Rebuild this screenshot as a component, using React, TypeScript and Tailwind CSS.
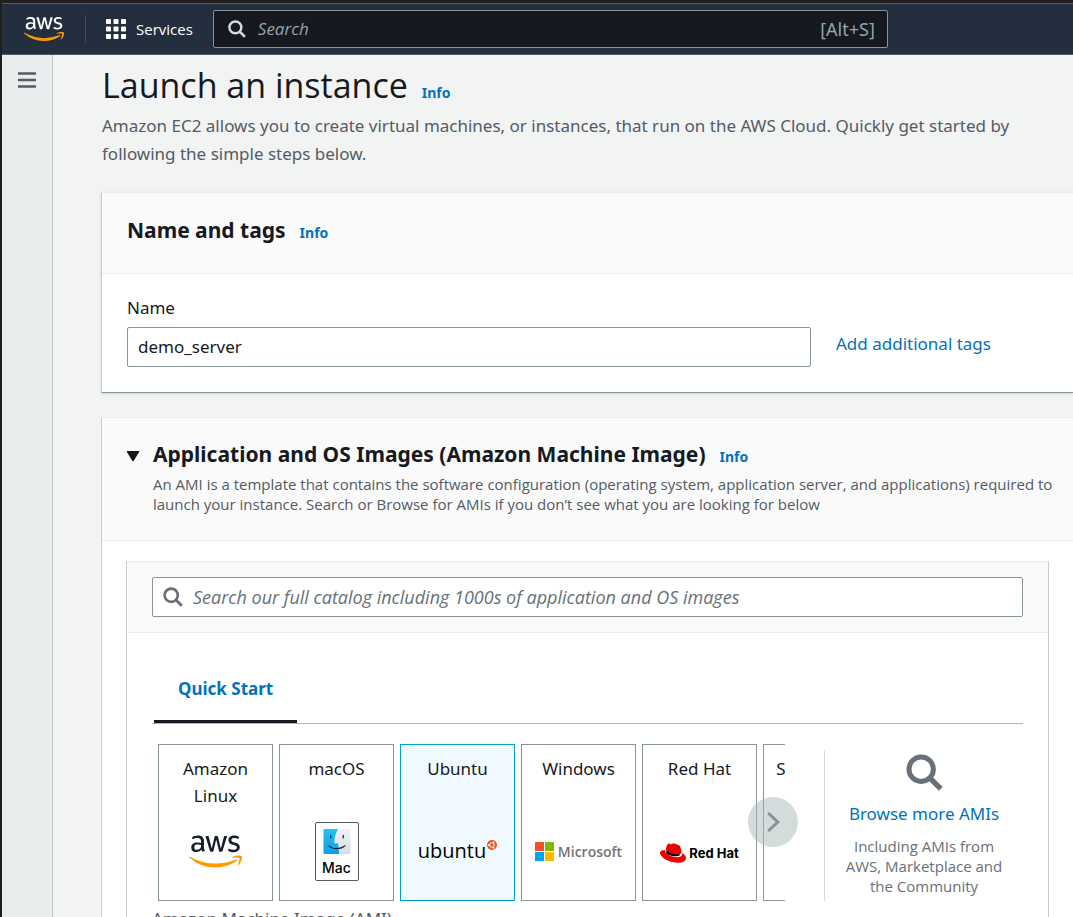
import React from "react";
import { FaAws, FaRedhat } from "react-icons/fa";

function SearchIcon({ className }: { className: string }) {
  return (
    <svg viewBox="0 0 20 20" fill="none" stroke="currentColor" className={className} aria-hidden="true">
      <circle cx="8.2" cy="8.2" r="6.6" strokeWidth="2.7" />
      <path d="M13 13l5.8 5.8" strokeWidth="2.9" />
    </svg>
  );
}

function AwsLogo({ id, letters, className }: { id: string; letters: string; className: string }) {
  return (
    <span className="block">
      <svg width="0" height="0" className="absolute" aria-hidden="true">
        <defs>
          <linearGradient id={id} gradientUnits="userSpaceOnUse" x1="0" y1="0" x2="0" y2="512">
            <stop offset="0.56" stopColor={letters} />
            <stop offset="0.56" stopColor="#ff9900" />
          </linearGradient>
        </defs>
      </svg>
      <FaAws fill={`url(#${id})`} className={className} aria-label="AWS" />
    </span>
  );
}

function FinderLogo() {
  return (
    <div className="flex h-[59px] w-11 flex-col items-center rounded-[2px] border border-[#545b64] bg-white pt-1.5">
      <svg viewBox="0 0 28 26" className="h-[26px] w-7" aria-hidden="true">
        <defs>
          <linearGradient id="finder-left" x1="0" y1="0" x2="0" y2="1">
            <stop offset="0" stopColor="#26c0f5" />
            <stop offset="1" stopColor="#0c9fe6" />
          </linearGradient>
          <linearGradient id="finder-right" x1="0" y1="0" x2="0" y2="1">
            <stop offset="0" stopColor="#f0f1f5" />
            <stop offset="1" stopColor="#d5dde8" />
          </linearGradient>
        </defs>
        <rect width="28" height="26" rx="1" fill="url(#finder-right)" />
        <path d="M1 0h14.5C13 4.500 11.800 9 11.600 14.500h4.200c0 4 .3 8 1.200 11.500H1a1 1 0 0 1-1-1V1a1 1 0 0 1 1-1z" fill="url(#finder-left)" />
        <path d="M15.500 0C13 4.500 11.800 9 11.600 14.500h4.200c0 4 .3 8 1.200 11.500" fill="none" stroke="#fff" strokeWidth="0.700" />
        <path d="M7.500 6.500v2.800M20.500 6.500v2.800" stroke="#1c2836" strokeWidth="1.300" strokeLinecap="round" />
        <path d="M5.500 17.500c4.500 4 12.500 4 16.800-.2" fill="none" stroke="#1c2836" strokeWidth="1.200" strokeLinecap="round" />
      </svg>
      <span className="pt-0.5 font-['Inter','Liberation_Sans',sans-serif] text-[14px] leading-6 font-medium text-black">Mac</span>
    </div>
  );
}

function UbuntuLogo() {
  return (
    <div className="flex items-start gap-px pb-0.5 text-black">
      <span className="font-['Open_Sans','Noto_Sans',sans-serif] text-[20px] leading-6">ubuntu</span>
      <svg viewBox="0 0 10 10" className="mt-px h-2.5 w-2.5" aria-hidden="true">
        <circle cx="5" cy="5" r="5" fill="#e95420" />
        <circle cx="5" cy="5" r="2.300" fill="none" stroke="#fff" strokeWidth="1" />
        <circle cx="1.900" cy="5" r="0.900" fill="#fff" />
        <circle cx="6.600" cy="2.300" r="0.900" fill="#fff" />
        <circle cx="6.600" cy="7.700" r="0.900" fill="#fff" />
      </svg>
    </div>
  );
}

function MicrosoftLogo() {
  return (
    <div className="flex items-center gap-1">
      <svg viewBox="0 0 19 19" className="h-[19px] w-[19px]" aria-hidden="true">
        <path fill="#f25022" d="M0 0h9v9H0z" />
        <path fill="#7fba00" d="M10 0h9v9h-9z" />
        <path fill="#00a4ef" d="M0 10h9v9H0z" />
        <path fill="#ffb900" d="M10 10h9v9h-9z" />
      </svg>
      <span className="font-['Open_Sans','Noto_Sans',sans-serif] text-[14px] leading-5 font-semibold text-[#737373]">Microsoft</span>
    </div>
  );
}

function RedHatLogo() {
  return (
    <div className="flex items-center gap-[3px] pt-0.5">
      <svg viewBox="0 0 512 512" className="h-[26px] w-[26px]" aria-hidden="true">
        <path d="M130 190l-10 60c30 50 190 100 270 50l-10-60z" fill="#000" />
        <FaRedhat size="512" color="#ee0000" />
      </svg>
      <span className="font-['Inter','Liberation_Sans',sans-serif] text-[13px] leading-5 font-bold text-black">Red Hat</span>
    </div>
  );
}

const images = [
  { name: "Amazon Linux", logo: <AwsLogo id="aws-dark" letters="#161e2d" className="h-[53px] w-[53px]" /> },
  { name: "macOS", logo: <FinderLogo /> },
  { name: "Ubuntu", logo: <UbuntuLogo />, selected: true },
  { name: "Windows", logo: <MicrosoftLogo /> },
  { name: "Red Hat", logo: <RedHatLogo /> },
  { name: "SUSE Linux", logo: null },
];

function InfoLink() {
  return (
    <a href="#info" className="text-[14px] leading-5 font-bold text-[#0073bb]">
      Info
    </a>
  );
}

function TopBar() {
  return (
    <header className="flex h-[52px] shrink-0 items-center border-y border-[#545b64] bg-[#232f3e] pl-[22px]">
      <a href="#home" aria-label="AWS home">
        <AwsLogo id="aws-light" letters="#ffffff" className="h-10 w-10" />
      </a>
      <div className="ml-[21px] h-7 w-px bg-[#414d5c]" />
      <button type="button" className="ml-5 flex items-center gap-2.5 font-['Open_Sans','Noto_Sans',sans-serif] text-[15px] font-medium text-white">
        <svg viewBox="0 0 20 20" fill="currentColor" className="h-5 w-5" aria-hidden="true">
          {[0, 7.5, 15].map((y) =>
            [0, 7.5, 15].map((x) => <rect key={`${x}-${y}`} x={x} y={y} width="5" height="5" rx="0.800" />)
          )}
        </svg>
        Services
      </button>
      <label className="ml-5 flex h-[38px] w-[675px] items-center gap-3 rounded-[2px] border border-[#879596] bg-[#16191f] px-3 text-[#95a5a6]">
        <SearchIcon className="ml-0.5 h-[18px] w-[18px] text-[#d5dbdb]" />
        <input
          type="search"
          aria-label="Search"
          placeholder="Search"
          className="min-w-0 flex-1 bg-transparent font-['Open_Sans','Noto_Sans',sans-serif] text-[17px] outline-none placeholder:text-[#95a5a6] placeholder:italic"
        />
        <span className="text-[18px]">[Alt+S]</span>
      </label>
    </header>
  );
}

function NameCard() {
  return (
    <section className="border border-r-0 border-[#c5cfd0] border-t-[#eaeded] border-b-[#879596] bg-white shadow-sm">
      <div className="flex h-[81px] items-center border-b border-[#eaeded] bg-[#fafafa] px-[25px] pb-1.5">
        <div className="flex items-baseline gap-3.5">
          <h2 className="text-[21px] leading-7 font-bold">Name and tags</h2>
          <InfoLink />
        </div>
      </div>
      <div className="px-[25px] pt-5 pb-[25px]">
        <label htmlFor="instance-name" className="block text-[17px] leading-7">
          Name
        </label>
        <div className="mt-[5px] flex items-center gap-[25px]">
          <input
            id="instance-name"
            type="text"
            defaultValue="demo_server"
            className="h-10 w-[684px] rounded-[2px] border border-[#879596] bg-white px-2.5 pb-0.5 text-[17px] outline-none"
          />
          <a href="#tags" className="pb-1.5 text-[17px] leading-7 whitespace-nowrap text-[#0073bb]">
            Add additional tags
          </a>
        </div>
      </div>
    </section>
  );
}

function ImagePicker() {
  return (
    <div className="flex pt-5">
      <div className="relative min-w-0 flex-1">
        <div className="flex gap-1.5 overflow-hidden pl-1.5">
          {images.map((image) => (
            <button
              key={image.name}
              type="button"
              aria-pressed={Boolean(image.selected)}
              className={
                image.selected
                  ? "flex h-[157px] w-[115px] shrink-0 flex-col items-center border border-[#00a1c9] bg-[#f1faff] pt-2.5"
                  : "flex h-[157px] w-[115px] shrink-0 flex-col items-center border border-[#879596] bg-white pt-2.5"
              }
            >
              <span className="h-[54px] px-3 text-center text-[17px] leading-[27px]">{image.name}</span>
              <span className="flex h-[85px] items-center justify-center">{image.logo}</span>
            </button>
          ))}
        </div>
        <button
          type="button"
          aria-label="Next images"
          className="absolute top-[53px] -right-[13px] flex h-[50px] w-[50px] items-center justify-center rounded-full bg-[#aab7b8]/50"
        >
          <svg viewBox="0 0 20 20" fill="none" stroke="#879196" strokeWidth="2.500" className="h-6 w-6" aria-hidden="true">
            <path d="M6 2.500l8 7.500-8 7.500" />
          </svg>
        </button>
      </div>
      <div className="mt-1.5 ml-[39px] flex w-[199px] shrink-0 flex-col items-center border-l border-[#d5dbdb] pt-1">
        <SearchIcon className="h-[37px] w-[37px] text-[#687078]" />
        <a href="#browse" className="mt-[9px] text-[17px] leading-7 whitespace-nowrap text-[#0073bb]">
          Browse more AMIs
        </a>
        <p className="mt-2 w-40 text-center font-['Open_Sans','Noto_Sans',sans-serif] text-[15px] leading-5 text-[#687078]">
          Including AMIs from AWS, Marketplace and the Community
        </p>
      </div>
    </div>
  );
}

function ImagesCard() {
  return (
    <section className="mt-6 border border-r-0 border-[#c5cfd0] border-t-[#eaeded] bg-white">
      <div className="flex gap-[13px] border-b border-[#eaeded] bg-[#fafafa] pt-[22px] pr-4 pb-[26px] pl-6">
        <button type="button" aria-label="Collapse section" className="mt-[9px] h-3.5 w-3.5 text-[#16191f]">
          <svg viewBox="0 0 14 14" fill="currentColor" className="h-3.5 w-3.5" aria-hidden="true">
            <path d="M1.500 2h11q1.200 0 .6 1L7.800 11.700q-.8.900-1.600 0L.900 3q-.6-1 .6-1z" />
          </svg>
        </button>
        <div>
          <div className="flex items-baseline gap-3.5">
            <h2 className="text-[21px] leading-7 font-bold">Application and OS Images (Amazon Machine Image)</h2>
            <InfoLink />
          </div>
          <p className="mt-1.5 font-['Open_Sans','Noto_Sans',sans-serif] text-[15px] leading-5 text-[#545b64]">
            An AMI is a template that contains the software configuration (operating system, application server, and
            applications) required to launch your instance. Search or Browse for AMIs if you don’t see what you are
            looking for below
          </p>
        </div>
      </div>
      <div className="px-6 pt-5">
        <div className="border border-[#c5cfd0] border-t-[#eaeded]">
          <div className="border-b border-[#eaeded] bg-[#fafafa] px-[25px] py-[15px]">
            <label className="flex h-10 items-center gap-2.5 rounded-[2px] border border-[#879596] bg-white px-2.5 text-[#687078]">
              <SearchIcon className="h-5 w-5" />
              <input
                type="search"
                aria-label="Search images"
                placeholder="Search our full catalog including 1000s of application and OS images"
                className="min-w-0 flex-1 bg-transparent font-['Open_Sans','Noto_Sans',sans-serif] text-[18px] outline-none placeholder:text-[#687078] placeholder:italic"
              />
            </label>
          </div>
          <div className="px-[25px] pt-9 pb-10">
            <div role="tablist" className="flex border-b border-[#aab7b8] pl-0.5">
              <button
                type="button"
                role="tab"
                aria-selected="true"
                className="h-[54px] border-b-3 border-[#16191f] px-6 pb-3 text-[17px] leading-7 font-bold text-[#0073bb]"
              >
                Quick Start
              </button>
            </div>
            <ImagePicker />
            <p className="mt-1 text-[17px] leading-7 text-[#545b64]">Amazon Machine Image (AMI)</p>
          </div>
        </div>
      </div>
    </section>
  );
}

export default function App() {
  return (
    <div className="flex h-screen flex-col overflow-hidden border-t-3 border-l-2 border-[#1f1f1f] bg-[#f2f3f3] font-['Noto_Sans','Open_Sans',sans-serif] text-[#16191f]">
      <TopBar />
      <div className="flex min-h-0 flex-1">
        <nav className="flex w-[51px] shrink-0 flex-col items-center border-r border-[#bcc5c8] bg-[#eaeded] pt-[17px]">
          <button type="button" aria-label="Open navigation" className="text-[#545b64]">
            <svg viewBox="0 0 18 16" stroke="currentColor" strokeWidth="2.400" className="h-4 w-[18px]" aria-hidden="true">
              <path d="M0 1.500h18M0 8h18M0 14.500h18" />
            </svg>
          </button>
        </nav>
        <main className="min-w-0 flex-1 overflow-hidden pl-12">
          <div className="flex items-baseline gap-3.5 pt-2 pl-px">
            <h1 className="font-['Open_Sans','Noto_Sans',sans-serif] text-[34px] leading-[44px]">Launch an instance</h1>
            <InfoLink />
          </div>
          <p className="mt-[5px] pr-10 pl-px text-[17px] leading-7 text-[#545b64]">
            Amazon EC2 allows you to create virtual machines, or instances, that run on the AWS Cloud. Quickly get
            started by following the simple steps below.
          </p>
          <div className="pt-6">
            <NameCard />
            <ImagesCard />
          </div>
        </main>
      </div>
    </div>
  );
}
